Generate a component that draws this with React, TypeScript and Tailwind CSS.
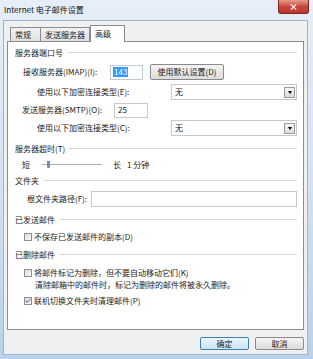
import { Check } from 'lucide-react';

const font = { fontFamily: '"Noto Sans CJK SC", "Liberation Sans", sans-serif' };

function GroupHeader({ title, className = '' }: { title: string; className?: string }) {
  return (
    <div className={`flex items-center h-[12px] pl-[7px] pr-[6px] ${className}`}>
      <span className="whitespace-nowrap">{title}</span>
      <div className="flex-1 ml-[4px] flex flex-col">
        <div className="h-px bg-[#d5d9de]" />
        <div className="h-px bg-white" />
      </div>
    </div>
  );
}

function Select({ className = '' }: { className?: string }) {
  return (
    <div
      className={`flex items-center h-[16px] w-[126px] border border-[#c5c8cc] bg-white pl-[3px] pr-[1px] ${className}`}
    >
      <span className="flex-1">无</span>
      <div className="w-[11px] h-[11px] border border-[#9a9a9a] bg-gradient-to-b from-[#f6f6f6] to-[#dcdcdc] flex items-center justify-center">
        <div className="w-0 h-0 border-l-[2.5px] border-r-[2.5px] border-t-[3px] border-l-transparent border-r-transparent border-t-black" />
      </div>
    </div>
  );
}

function Box({ checked = false }: { checked?: boolean }) {
  return (
    <div className="w-[8px] h-[8px] border border-[#8f8f8f] bg-gradient-to-br from-[#dcdcdc] to-[#f7f7f7] flex items-center justify-center">
      {checked && <Check className="w-[8px] h-[8px] text-[#2d4f86]" strokeWidth={4} />}
    </div>
  );
}

export default function App() {
  return (
    <div
      className="w-[313px] h-[359px] bg-gradient-to-b from-[#e6eef8] via-[#d4e2f2] to-[#b9d1ec] text-[8px] leading-none text-[#1a1a1a] flex flex-col"
      style={font}
    >
      <div className="h-[20px] flex items-start">
        <span className="ml-[4px] mt-[6px] text-[8px] text-[#111]">Internet 电子邮件设置</span>
        <div className="flex-1" />
        <div className="w-[31px] h-[14px] mr-[4px] rounded-b-[3px] border border-t-0 border-[#7c2a22] bg-gradient-to-b from-[#e49a8c] via-[#c9463d] to-[#b73a2c] flex items-center justify-center text-white text-[9px] font-bold">
          ×
        </div>
      </div>

      <div className="ml-[3px] mr-[5px] h-[335px] bg-[#f0f0f0] border border-[#9eb3cc] flex flex-col">
        <div className="flex items-end h-[20px] pl-[6px]">
          <div className="h-[14px] w-[31px] border border-b-0 border-[#898c95] bg-gradient-to-b from-[#f2f2f2] to-[#e0e0e0] flex items-center pl-[4px] mb-0">
            常规
          </div>
          <div className="h-[14px] w-[49px] border border-b-0 border-l-0 border-[#898c95] bg-gradient-to-b from-[#f2f2f2] to-[#e0e0e0] flex items-center pl-[4px]">
            发送服务器
          </div>
          <div className="h-[17px] w-[35px] border border-b-0 border-[#898c95] bg-white flex items-start pt-[4px] pl-[4px] -mb-px relative">
            高级
          </div>
        </div>

        <div className="ml-[3px] w-[297px] h-[289px] border border-[#898c95] bg-white flex flex-col">
          <GroupHeader title="服务器端口号" className="mt-[5px]" />

          <div className="flex items-center h-[16px] mt-[5px]">
            <span className="ml-[15px] w-[87px]">接收服务器(IMAP)(I):</span>
            <div className="w-[33px] h-[15px] border border-[#c5c8cc] flex items-center pl-[2px]">
              <span className="bg-[#3399ff] text-white px-[1px] h-[10px] flex items-center">143</span>
            </div>
            <div className="ml-[7px] w-[74px] h-[16px] rounded-[2px] border border-[#8a8a8a] bg-gradient-to-b from-[#f4f4f4] to-[#dcdcdc] flex items-center justify-center">
              使用默认设置(D)
            </div>
          </div>

          <div className="flex items-center h-[16px] mt-[4px]">
            <span className="ml-[29px] w-[134px]">使用以下加密连接类型(E):</span>
            <Select />
          </div>

          <div className="flex items-center h-[16px] mt-[2px]">
            <span className="ml-[14px] w-[92px]">发送服务器(SMTP)(O):</span>
            <div className="w-[34px] h-[15px] border border-[#c5c8cc] flex items-center pl-[3px]">25</div>
          </div>

          <div className="flex items-center h-[16px] mt-[2px]">
            <span className="ml-[29px] w-[134px]">使用以下加密连接类型(C):</span>
            <Select />
          </div>

          <GroupHeader title="服务器超时(T)" className="mt-[7px]" />

          <div className="flex items-center h-[14px] mt-[3px]">
            <span className="ml-[14px] w-[20px]">短</span>
            <div className="relative w-[60px] h-[8px] flex items-center">
              <div className="w-full h-[2px] border-t border-[#b0b0b0] border-b border-b-white bg-[#e6e6e6]" />
              <div className="absolute left-[5px] top-0 w-[3px] h-[7px] bg-[#7a8fa8] rounded-b-[1px]" />
            </div>
            <span className="ml-[11px]">长</span>
            <span className="ml-[6px]">1 分钟</span>
          </div>

          <GroupHeader title="文件夹" className="mt-[3px]" />

          <div className="flex items-center h-[16px] mt-[4px]">
            <span className="ml-[19px] w-[64px]">根文件夹路径(F):</span>
            <div className="w-[206px] h-[16px] border border-[#c5c8cc]" />
          </div>

          <GroupHeader title="已发送邮件" className="mt-[7px]" />

          <div className="flex items-center h-[12px] mt-[5px] pl-[16px] gap-[2px]">
            <Box />
            <span>不保存已发送邮件的副本(D)</span>
          </div>

          <GroupHeader title="已删除邮件" className="mt-[6px]" />

          <div className="flex items-center h-[12px] mt-[6px] pl-[16px] gap-[2px]">
            <Box />
            <span>将邮件标记为删除，但不要自动移动它们(K)</span>
          </div>
          <div className="flex items-center h-[12px] pl-[27px]">
            清除邮箱中的邮件时，标记为删除的邮件将被永久删除。
          </div>
          <div className="flex items-center h-[12px] mt-[4px] pl-[16px] gap-[2px]">
            <Box checked />
            <span>联机切换文件夹时清理邮件(P)</span>
          </div>
        </div>

        <div className="flex justify-end items-center mt-[7px] pr-[3px] gap-[6px]">
          <div className="w-[49px] h-[13px] rounded-[2px] border border-[#3c7fb1] bg-gradient-to-b from-[#eaf6fd] to-[#c9e4f5] flex items-center justify-center">
            确定
          </div>
          <div className="w-[49px] h-[13px] rounded-[2px] border border-[#8a8a8a] bg-gradient-to-b from-[#f4f4f4] to-[#dcdcdc] flex items-center justify-center">
            取消
          </div>
        </div>
      </div>
    </div>
  );
}
